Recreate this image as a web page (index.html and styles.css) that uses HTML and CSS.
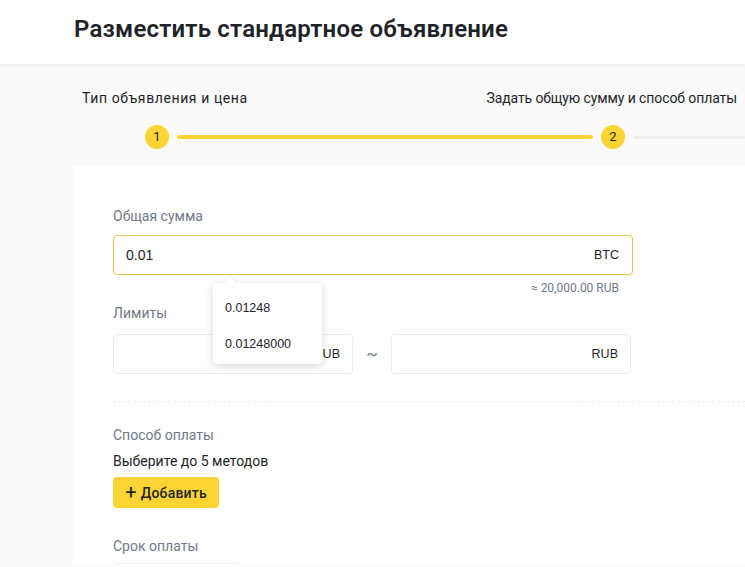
FILE: index.html
```html
<!DOCTYPE html>
<html lang="ru">
<head>
<meta charset="utf-8">
<title>Разместить стандартное объявление</title>
<link rel="stylesheet" href="styles.css">
</head>
<body>
<header class="header">
  <h1 class="title">Разместить стандартное объявление</h1>
</header>
<main class="main">
  <div class="steps-labels">
    <div class="step-label step-label-1">Тип объявления и цена</div>
    <div class="step-label step-label-2">Задать общую сумму и способ оплаты</div>
  </div>
  <div class="steps-track">
    <span class="step-dot">1</span>
    <span class="step-line step-line-active"></span>
    <span class="step-dot">2</span>
    <span class="step-line step-line-rest"></span>
  </div>
  <section class="card">
    <div class="field-label first">Общая сумма</div>
    <div class="input input-focus">
      <span class="input-value">0.01</span>
      <span class="input-unit">BTC</span>
      <div class="dropdown">
        <div class="dropdown-arrow"></div>
        <div class="dropdown-item">0.01248</div>
        <div class="dropdown-item">0.01248000</div>
      </div>
    </div>
    <div class="hint">≈ 20,000.00 RUB</div>
    <div class="field-label limits-label">Лимиты</div>
    <div class="limits">
      <div class="input input-small"><span class="input-value"></span><span class="input-unit">RUB</span></div>
      <span class="tilde">~</span>
      <div class="input input-small"><span class="input-value"></span><span class="input-unit">RUB</span></div>
    </div>
    <div class="divider"></div>
    <div class="field-label pay-label">Способ оплаты</div>
    <div class="pay-note">Выберите до 5 методов</div>
    <button class="add-btn"><span class="plus">+</span>Добавить</button>
    <div class="field-label term-label">Срок оплаты</div>
    <div class="term-box"></div>
  </section>
</main>
</body>
</html>
```
FILE: styles.css
```css
* { box-sizing: border-box; }
html, body { margin: 0; padding: 0; }
body {
  width: 745px;
  height: 567px;
  overflow: hidden;
  background: #fafafa;
  font-family: "Roboto", "Liberation Sans", sans-serif;
  color: #1e2329;
}
.header {
  height: 64px;
  background: #fff;
  box-shadow: 0 1px 4px rgba(0,0,0,0.06);
  padding: 14px 0 0 74px;
  position: relative;
  z-index: 1;
}
.title {
  margin: 0;
  font-size: 24px;
  line-height: 30px;
  font-weight: 600;
  color: #1e2329;
  letter-spacing: 0.2px;
}
.main { padding-top: 24px; }
.steps-labels {
  display: flex;
  height: 20px;
  font-size: 14px;
  line-height: 20px;
  color: #1e2329;
}
.step-label { white-space: nowrap; }
.step-label-1 { margin-left: 82px; letter-spacing: 0.6px; }
.step-label-2 { margin-left: auto; margin-right: 8px; letter-spacing: -0.1px; }
.steps-track {
  display: flex;
  align-items: center;
  margin-top: 17px;
  padding-left: 145px;
  height: 24px;
}
.step-dot {
  width: 24px;
  height: 24px;
  border-radius: 50%;
  background: #fcd535;
  flex: none;
  font-size: 13px;
  line-height: 24px;
  text-align: center;
  color: #1e2329;
}
.step-line { height: 4px; border-radius: 2px; }
.step-line-active { width: 416px; margin: 0 8px; background: #fcd535; }
.step-line-rest { flex: 1; margin-left: 8px; background: #eceef1; height: 3px; }
.card {
  margin: 17px 0 0 73px;
  background: #fff;
  padding: 40px 0 0 40px;
  height: 400px;
  overflow: hidden;
}
.field-label {
  font-size: 14px;
  line-height: 20px;
  color: #707a8a;
}
.first { margin-top: 0; }
.input {
  position: relative;
  display: flex;
  align-items: center;
  justify-content: space-between;
  width: 520px;
  height: 40px;
  margin-top: 9px;
  padding: 0 13px 0 12px;
  border: 1px solid #eaecef;
  border-radius: 4px;
  background: #fff;
  font-family: "Liberation Sans", Arial, sans-serif;
}
.input-focus { border-color: #e8c547; }
.input-value { font-size: 14px; color: #1e2329; }
.input-unit { font-size: 12.5px; color: #1e2329; }
.hint {
  width: 520px;
  text-align: right;
  padding-right: 14px;
  margin-top: 6px;
  font-size: 12px;
  line-height: 14px;
  color: #707a8a;
}
.limits-label { margin-top: 8px; }
.limits {
  display: flex;
  align-items: center;
  margin-top: 11px;
}
.input-small { width: 240px; margin-top: 0; padding-right: 12px; }
.tilde {
  width: 38px;
  text-align: center;
  font-size: 17px;
  color: #707a8a;
}
.dropdown {
  position: absolute;
  left: 99px;
  top: 47px;
  width: 109px;
  height: 81px;
  background: #fff;
  border-radius: 4px;
  box-shadow: 0 2px 8px rgba(0,0,0,0.16);
  padding-top: 14px;
  z-index: 5;
}
.dropdown-arrow {
  position: absolute;
  top: -5px;
  left: 12px;
  width: 10px;
  height: 10px;
  background: #fff;
  transform: rotate(45deg);
  box-shadow: -1px -1px 2px rgba(0,0,0,0.06);
}
.dropdown-item {
  position: relative;
  padding-left: 12px;
  height: 36px;
  line-height: 22px;
  font-size: 12.5px;
  color: #1e2329;
}
.divider {
  margin-top: 27px;
  border-top: 1px dashed #eaecef;
  width: 100%;
}
.pay-label { margin-top: 23px; }
.pay-note {
  margin-top: 6px;
  font-size: 14px;
  line-height: 20px;
  color: #1e2329;
}
.add-btn {
  display: flex;
  align-items: center;
  justify-content: center;
  margin-top: 6px;
  width: 106px;
  height: 31px;
  border: 0;
  border-radius: 4px;
  background: #fcd535;
  font-family: inherit;
  font-size: 14px;
  font-weight: 500;
  color: #1e2329;
  padding: 0;
  letter-spacing: 0.2px;
}
.plus { font-size: 20px; font-weight: 400; margin-right: 4px; line-height: 20px; position: relative; top: -1px; }
.term-label { margin-top: 28px; }
.term-box {
  margin-top: 7px;
  width: 128px;
  height: 40px;
  border: 1px solid #eaecef;
  border-radius: 4px;
}
```
